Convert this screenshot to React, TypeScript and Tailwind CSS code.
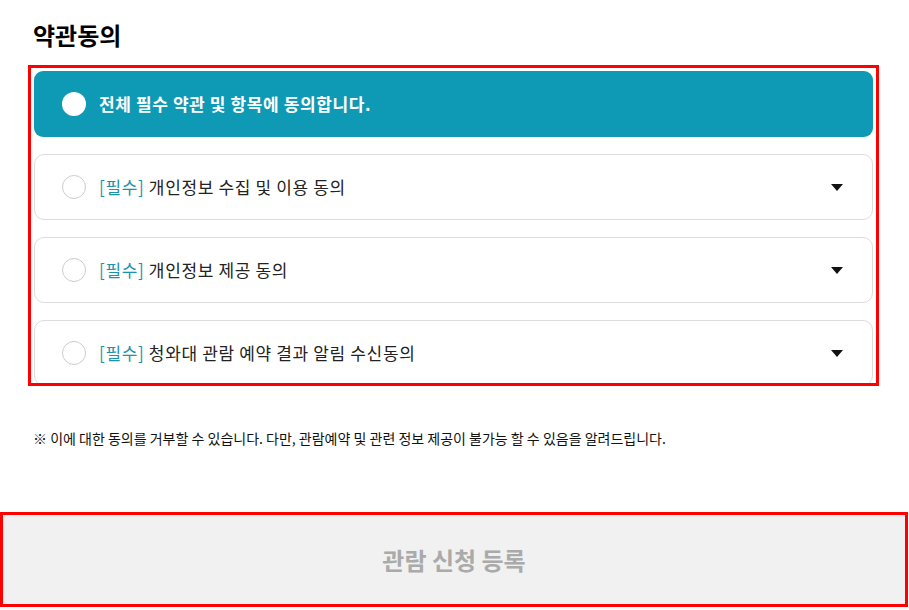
import React from "react";

const rows = [
  "개인정보 수집 및 이용 동의",
  "개인정보 제공 동의",
  "청와대 관람 예약 결과 알림 수신동의",
];

function Caret() {
  return (
    <svg width="12" height="7" viewBox="0 0 12 7" className="shrink-0">
      <path d="M0 0 H12 L6 7 Z" fill="#111" />
    </svg>
  );
}

export default function App() {
  return (
    <div
      className="w-[909px] h-[610px] bg-white overflow-hidden text-[#222]"
      style={{ fontFamily: '"Noto Sans CJK KR", "Noto Sans", sans-serif' }}
    >
      <div className="pl-[33px] pt-[18px]">
        <h2 className="text-[24px] font-bold leading-[34px] text-black">약관동의</h2>
      </div>

      <div className="ml-[28px] mt-[13px] w-[851px] h-[321px] border-[3px] border-[#ff0000] overflow-hidden px-[3px] pt-[3px]">
        <div className="flex flex-col gap-[17px]">
          <div className="h-[66px] rounded-[9px] bg-[#0e9ab4] flex items-center pl-[28px]">
            <span className="w-[24px] h-[24px] rounded-full bg-white shrink-0" />
            <span className="ml-[13px] text-[17px] font-bold text-white tracking-[0.6px]">
              전체 필수 약관 및 항목에 동의합니다.
            </span>
          </div>
          {rows.map((r) => (
            <div
              key={r}
              className="h-[66px] rounded-[10px] border border-[#dddddd] bg-white flex items-center pl-[27px] pr-[29px]"
            >
              <span className="w-[24px] h-[24px] rounded-full border border-[#cccccc] bg-white shrink-0" />
              <span className="ml-[13px] text-[17px] tracking-[0.65px] flex-1">
                <span className="text-[#1b93ad]">[필수]</span> {r}
              </span>
              <Caret />
            </div>
          ))}
        </div>
      </div>

      <p className="ml-[33px] mt-[42px] text-[14px] text-[#111] tracking-[0px] leading-[20px]">
        ※ 이에 대한 동의를 거부할 수 있습니다. 다만, 관람예약 및 관련 정보 제공이 불가능 할 수 있음을 알려드립니다.
      </p>

      <div className="mt-[64px] w-[908px] h-[95px] border-[3px] border-[#ff0000] bg-[#f1f1f1] flex items-center justify-center">
        <span className="text-[24px] font-bold text-[#aaaaaa]">관람 신청 등록</span>
      </div>
    </div>
  );
}
